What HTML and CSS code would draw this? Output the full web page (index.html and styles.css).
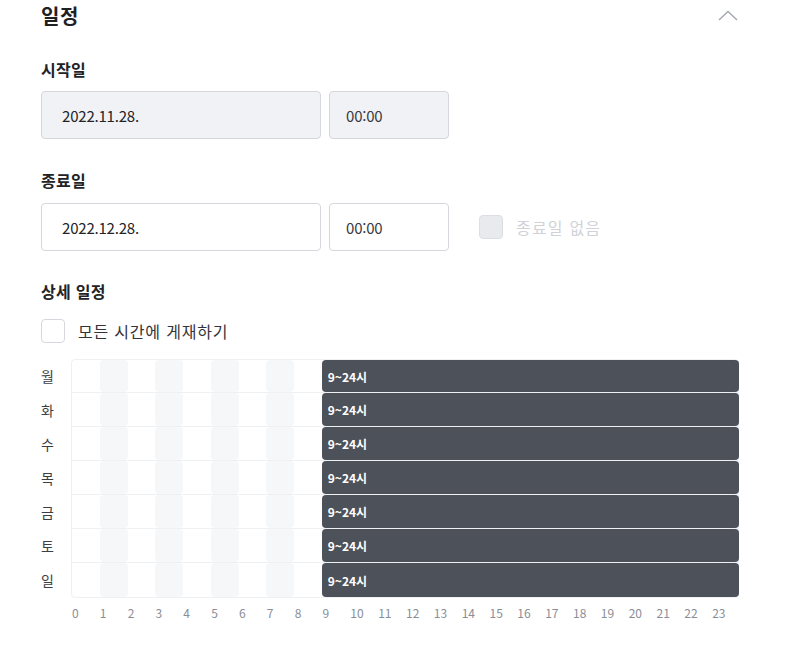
FILE: index.html
```html
<!DOCTYPE html>
<html lang="ko">
<head>
<meta charset="utf-8">
<title>일정</title>
<link rel="stylesheet" href="styles.css">
</head>
<body>
<div class="panel">
  <div class="header">
    <h2 class="title">일정</h2>
    <svg class="chevron" width="20" height="11" viewBox="0 0 20 11"><path d="M1 10 L10 1.5 L19 10" fill="none" stroke="#a3a7ae" stroke-width="1.4"/></svg>
  </div>

  <div class="label first">시작일</div>
  <div class="field-row">
    <div class="input date disabled">2022.11.28.</div>
    <div class="input time disabled">00:00</div>
  </div>

  <div class="label second">종료일</div>
  <div class="field-row">
    <div class="input date">2022.12.28.</div>
    <div class="input time">00:00</div>
    <label class="check check-disabled"><span class="box box-disabled"></span><span class="check-text muted">종료일 없음</span></label>
  </div>

  <div class="label third">상세 일정</div>
  <label class="check all-time"><span class="box"></span><span class="check-text">모든 시간에 게재하기</span></label>

  <div class="schedule">
    <div class="days">
      <div class="day">월</div><div class="day">화</div><div class="day">수</div><div class="day">목</div><div class="day">금</div><div class="day">토</div><div class="day">일</div>
    </div>
    <div class="grid">
      <div class="row"><span class="c"></span><span class="c s"></span><span class="c"></span><span class="c s"></span><span class="c"></span><span class="c s"></span><span class="c"></span><span class="c s"></span><span class="c"></span><span class="bar">9~24시</span></div>
      <div class="row"><span class="c"></span><span class="c s"></span><span class="c"></span><span class="c s"></span><span class="c"></span><span class="c s"></span><span class="c"></span><span class="c s"></span><span class="c"></span><span class="bar">9~24시</span></div>
      <div class="row"><span class="c"></span><span class="c s"></span><span class="c"></span><span class="c s"></span><span class="c"></span><span class="c s"></span><span class="c"></span><span class="c s"></span><span class="c"></span><span class="bar">9~24시</span></div>
      <div class="row"><span class="c"></span><span class="c s"></span><span class="c"></span><span class="c s"></span><span class="c"></span><span class="c s"></span><span class="c"></span><span class="c s"></span><span class="c"></span><span class="bar">9~24시</span></div>
      <div class="row"><span class="c"></span><span class="c s"></span><span class="c"></span><span class="c s"></span><span class="c"></span><span class="c s"></span><span class="c"></span><span class="c s"></span><span class="c"></span><span class="bar">9~24시</span></div>
      <div class="row"><span class="c"></span><span class="c s"></span><span class="c"></span><span class="c s"></span><span class="c"></span><span class="c s"></span><span class="c"></span><span class="c s"></span><span class="c"></span><span class="bar">9~24시</span></div>
      <div class="row"><span class="c"></span><span class="c s"></span><span class="c"></span><span class="c s"></span><span class="c"></span><span class="c s"></span><span class="c"></span><span class="c s"></span><span class="c"></span><span class="bar">9~24시</span></div>
    </div>
  </div>
  <div class="axis">
    <span>0</span><span>1</span><span>2</span><span>3</span><span>4</span><span>5</span><span>6</span><span>7</span><span>8</span><span>9</span><span>10</span><span>11</span><span>12</span><span>13</span><span>14</span><span>15</span><span>16</span><span>17</span><span>18</span><span>19</span><span>20</span><span>21</span><span>22</span><span>23</span>
  </div>
</div>
</body>
</html>
```

FILE: styles.css
```css
* { box-sizing: border-box; }
html, body {
  margin: 0;
  padding: 0;
  background: #ffffff;
  font-family: "Noto Sans CJK KR", "Noto Sans", sans-serif;
  color: #222326;
}
.panel {
  width: 739px;
  padding-left: 41px;
}
.header {
  height: 32px;
  display: flex;
  align-items: center;
  justify-content: space-between;
}
.title {
  margin: 0;
  font-size: 20px;
  line-height: 32px;
  font-weight: 700;
  color: #1f2023;
  letter-spacing: 0.5px;
}
.chevron { display: block; margin-top: -2px; margin-right: 1px; }
.label {
  font-size: 16px;
  line-height: 24px;
  font-weight: 700;
  color: #222326;
  letter-spacing: 0.3px;
}
.label.first { margin-top: 25px; }
.label.second { margin-top: 29px; }
.label.third { margin-top: 28px; }
.field-row {
  display: flex;
  align-items: center;
  gap: 8px;
  margin-top: 11px;
}
.label.first + .field-row { margin-top: 10px; }
.input {
  height: 48px;
  border: 1px solid #d5d7dc;
  border-radius: 4px;
  background: #fff;
  display: flex;
  align-items: center;
  font-size: 15px;
  color: #222326;
  letter-spacing: -0.2px;
}
.input.disabled { background: #f1f2f6; }
.input.date { width: 280px; padding-left: 20px; }
.input.time { width: 120px; padding-left: 16px; color: #3a3b3f; }
.check {
  display: flex;
  align-items: center;
  gap: 13px;
}
.check-disabled { margin-left: 22px; }
.box {
  width: 24px;
  height: 24px;
  border: 1px solid #d5d7dc;
  border-radius: 4px;
  background: #fff;
  flex: none;
}
.box-disabled { background: #e9eaee; border-color: #dcdee3; }
.check-text { font-size: 16px; line-height: 24px; color: #333438; letter-spacing: 0.8px; }
.check-text.muted { color: #d0d2d7; letter-spacing: 1.2px; }
.all-time { margin-top: 16px; }
.schedule {
  display: flex;
  margin-top: 16px;
}
.days {
  width: 30px;
  display: flex;
  flex-direction: column;
}
.day {
  height: 34px;
  line-height: 34px;
  font-size: 14px;
  color: #3d3e42;
}
.grid {
  flex: 1;
  border: 1px solid #eef0f3;
  border-radius: 4px;
  display: flex;
  flex-direction: column;
}
.row {
  display: grid;
  grid-template-columns: repeat(24, 1fr);
  height: 34px;
  border-bottom: 1px solid #eef0f3;
}
.row:first-child { height: 33px; }
.row:last-child { border-bottom: none; }
.c { display: block; }
.c.s { background: #f6f7f9; border-radius: 4px; }
.bar {
  grid-column: 10 / -1;
  background: #4d515a;
  border-radius: 4px;
  color: #fff;
  font-size: 12px;
  font-weight: 700;
  display: flex;
  align-items: center;
  padding-left: 6px;
  margin-right: -1px;
}
.axis {
  margin-left: 30px;
  display: grid;
  grid-template-columns: repeat(24, 1fr);
  height: 28px;
  align-items: center;
}
.axis span {
  font-size: 12px;
  color: #8a8e96;
  padding-left: 1px;
}
```
